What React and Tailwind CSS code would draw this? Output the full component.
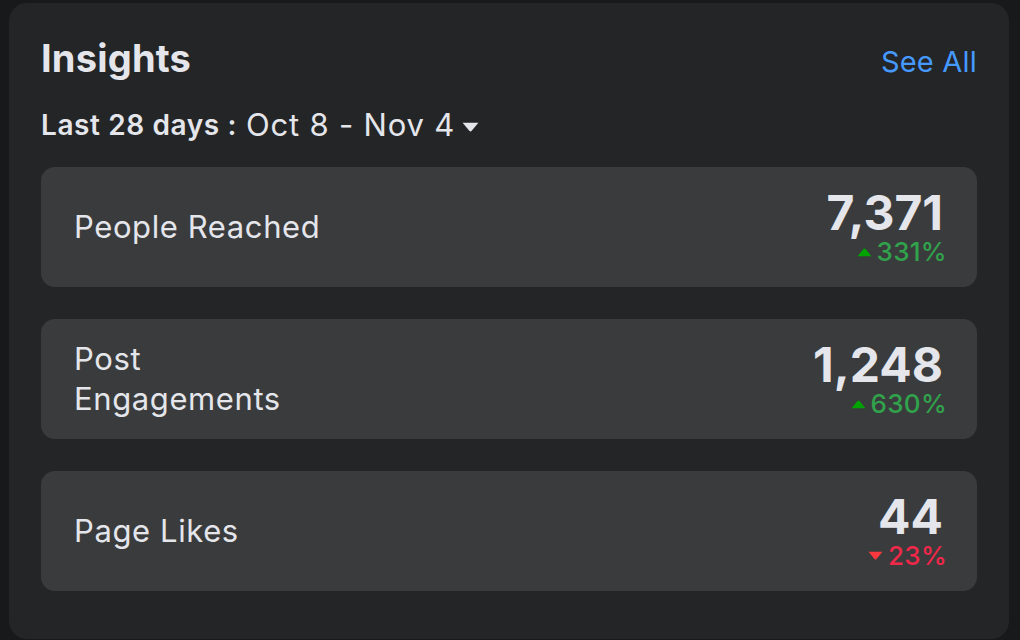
const stats = [
  { label: ['People Reached'], value: '7,371', change: '331%', up: true },
  { label: ['Post', 'Engagements'], value: '1,248', change: '630%', up: true },
  { label: ['Page Likes'], value: '44', change: '23%', up: false },
];

function Caret({ up, className }) {
  return (
    <svg viewBox="0 0 14 9" className={className} fill="currentColor">
      {up ? (
        <path d="M0.5 8.5 L6 1.8 Q7 0.6 8 1.8 L13.5 8.5 Z" />
      ) : (
        <path d="M0.5 0.5 L6 7.2 Q7 8.4 8 7.2 L13.5 0.5 Z" />
      )}
    </svg>
  );
}

export default function App() {
  return (
    <div className="w-[1020px] h-[640px] bg-[#18191a] pl-[9px] pr-[11px] pt-[3px] pb-[1px] font-['Inter',sans-serif]">
      <div className="h-full bg-[#242526] rounded-[18px] px-[32px] pt-[32px]">
        {/* header */}
        <div className="flex items-start justify-between">
          <h2 className="text-[38px] leading-[46px] font-bold text-[#e4e6eb] tracking-[0.2px]">Insights</h2>
          <a className="mt-[9px] text-[29px] leading-[36px] text-[#4599ff] tracking-[0.2px]">See All</a>
        </div>
        <div className="mt-[26px] flex items-center text-[#e4e6eb] leading-[36px]">
          <span className="text-[28px] font-semibold tracking-[0.6px]">Last 28 days :</span>
          <span className="text-[31px] ml-[9px] tracking-[0.8px]">Oct 8 - Nov 4</span>
          <Caret up={false} className="w-[17px] h-[11px] ml-[7px] mt-[4px] text-[#e4e6eb]" />
        </div>

        <div className="mt-[24px] flex flex-col gap-[32px]">
          {stats.map((s) => (
            <div
              key={s.value}
              className="h-[120px] bg-[#3a3b3c] rounded-[14px] pl-[33px] pr-[33px] flex items-center justify-between"
            >
              <div className="text-[31px] leading-[40px] text-[#e4e6eb] tracking-[0.6px]">
                {s.label.map((l) => (
                  <div key={l}>{l}</div>
                ))}
              </div>
              <div className="flex flex-col items-end">
                <div className="mr-[1px] text-[48px] leading-[50px] font-bold text-[#e4e6eb]">{s.value}</div>
                <div
                  className={`-mr-[3px] flex items-center text-[26px] leading-[28px] tracking-[0.3px] ${
                    s.up ? 'text-[#31a24c]' : 'text-[#f02849]'
                  }`}
                >
                  <Caret
                    up={s.up}
                    className={`w-[15px] h-[10px] mr-[5px] ${s.up ? 'text-[#00a400]' : 'text-[#fa383e]'}`}
                  />
                  <span className="font-medium">{s.change}</span>
                </div>
              </div>
            </div>
          ))}
        </div>
      </div>
    </div>
  );
}
